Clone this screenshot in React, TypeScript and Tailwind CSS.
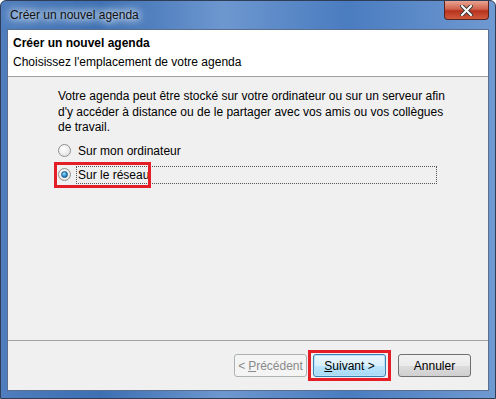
import React from 'react';

const font = { fontFamily: '"Liberation Sans", Arial, sans-serif' };

const Radio = ({ checked }: { checked?: boolean }) => (
  <span className="relative flex h-[13px] w-[13px] shrink-0 items-center justify-center rounded-full border border-[#8f8f8f] bg-[radial-gradient(circle_at_40%_35%,#ffffff,#dcdcdc)]">
    {checked && (
      <span className="h-[7px] w-[7px] rounded-full border border-[#1b5a86] bg-[radial-gradient(circle_at_40%_35%,#9fe2ff,#1f86c7_60%,#0b4e80)]" />
    )}
  </span>
);

const App = () => {
  return (
    <div
      className="flex h-[399px] w-[496px] flex-col overflow-hidden rounded-t-[6px] border border-[#2f3d57] bg-[linear-gradient(90deg,#4f7dbd_0%,#3d6fb3_20%,#6d97cf_45%,#4a7cc0_70%,#6f99d1_100%)] text-[12px] text-black"
      style={font}
    >
      {/* Title bar */}
      <div className="flex h-[28px] shrink-0 items-start justify-between pl-[8px] pr-[6px]">
        <span className="mt-[7px] px-[1px] leading-[15px] text-[#111] [text-shadow:0_0_6px_#e6f0fb,0_0_10px_#e6f0fb,0_0_14px_#d6e4f5]">
          Créer un nouvel agenda
        </span>
        <button className="flex h-[19px] w-[45px] items-center justify-center rounded-b-[4px] border border-t-0 border-[#5a2320] bg-[linear-gradient(180deg,#e8a493_0%,#d0624d_45%,#b7321e_55%,#cf5b3d_100%)]">
          <svg width="13" height="11" viewBox="0 0 13 11">
            <path d="M2 1 L11 10 M11 1 L2 10" stroke="#3a3a3a" strokeWidth="4" strokeLinecap="square" />
            <path d="M2 1 L11 10 M11 1 L2 10" stroke="#ffffff" strokeWidth="2" strokeLinecap="square" />
          </svg>
        </button>
      </div>

      {/* Client area */}
      <div className="mx-[6px] mb-[7px] flex flex-1 flex-col border border-[#5a6f8f] bg-[#f0f0f0]">
        <div className="flex h-[47px] shrink-0 flex-col justify-center border-b border-[#a0a0a0] bg-white pl-[5px] leading-[19px]">
          <div className="font-bold">Créer un nouvel agenda</div>
          <div>Choisissez l'emplacement de votre agenda</div>
        </div>

        <div className="flex flex-1 flex-col border-b border-[#a0a0a0] pl-[50px] pt-[12px]">
          <p className="leading-[15.5px]">
            Votre agenda peut être stocké sur votre ordinateur ou sur un serveur afin
            <br />
            d'y accéder à distance ou de le partager avec vos amis ou vos collègues
            <br />
            de travail.
          </p>
          <div className="mt-[5px] flex h-[20px] items-center gap-[7px]">
            <Radio />
            <span>Sur mon ordinateur</span>
          </div>
          <div className="relative mt-[4px] flex h-[20px] items-center gap-[5px]">
            <Radio checked />
            <span className="flex h-[18px] w-[361px] items-center border border-dotted border-[#555] pl-[1px]">
              Sur le réseau
            </span>
            <span className="absolute left-[-4px] top-[-3px] h-[26px] w-[97px] border-[3px] border-[#e31e26]" />
          </div>
        </div>

        <div className="flex h-[49px] shrink-0 items-center justify-end pr-[17px]">
          <button className="flex h-[23px] w-[73px] items-center justify-center rounded-[3px] border border-[#adb2b5] bg-[#f4f4f4] text-[#8a8a8a]">
            &lt; <span className="ml-[3px] underline">P</span>récédent
          </button>
          <div className="relative ml-[6px]">
            <button className="flex h-[23px] w-[73px] items-center justify-center rounded-[3px] border border-[#3c7fb1] bg-[linear-gradient(180deg,#eaf6fd_0%,#d9f0fc_50%,#bee6fd_51%,#a7d9f5_100%)] shadow-[inset_0_0_0_1px_#b9e3fa]">
              <span className="underline">S</span>uivant &gt;
            </button>
            <span className="absolute left-[-5px] top-[-4px] h-[31px] w-[83px] border-[3px] border-[#e31e26]" />
          </div>
          <button className="ml-[12px] flex h-[23px] w-[73px] items-center justify-center rounded-[3px] border border-[#707070] bg-[linear-gradient(180deg,#f2f2f2_0%,#ebebeb_50%,#dddddd_51%,#cfcfcf_100%)]">
            Annuler
          </button>
        </div>
      </div>
    </div>
  );
};

export default App;
